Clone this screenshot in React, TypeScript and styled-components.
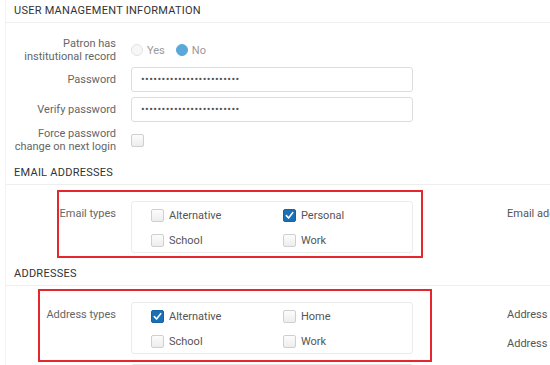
import React from "react";
import styled, { createGlobalStyle } from "styled-components";

const GlobalStyle = createGlobalStyle`
	* { box-sizing: border-box; }
	html, body {
		margin: 0;
		padding: 0;
		background: #fff;
		overflow: hidden;
	}
	body {
		width: 550px;
		height: 365px;
		font-family: Roboto, "Liberation Sans", Arial, sans-serif;
	}
`;

const Panel = styled.div`
	margin-left: 5px;
	min-height: 365px;
	border-left: 1px solid #f3f3f3;
`;

const SectionTitle = styled.h3<{ $mt: number }>`
	margin: ${(p) => p.$mt}px 0 0;
	height: 23px;
	padding: 1px 0 0 8px;
	line-height: 20px;
	border-bottom: 1px solid #eeeeee;
	font-size: 11px;
	font-weight: 400;
	letter-spacing: 0.25px;
	color: #333;
	text-transform: uppercase;
	white-space: nowrap;
`;

const Form = styled.div`
	display: grid;
	grid-template-rows: 25px 25px 25px 24px;
	row-gap: 5px;
	padding-top: 14px;
`;

const Row = styled.div`
	display: grid;
	grid-template-columns: 110px 282px 1fr;
	column-gap: 15px;
	align-items: center;
`;

const Label = styled.div`
	text-align: right;
	font-size: 11px;
	line-height: 13px;
	color: #666;
`;

const RadioGroup = styled.div`
	display: flex;
	align-items: center;
	font-size: 11px;
	color: #999;
`;

const RadioItem = styled.label`
	display: flex;
	align-items: center;
	gap: 4px;
	margin-right: 11px;
`;

const RadioDot = styled.span<{ $on?: boolean }>`
	width: 12px;
	height: 12px;
	border-radius: 50%;
	border: 1px solid ${(p) => (p.$on ? "#5aa7da" : "#e2e2e2")};
	background: ${(p) => (p.$on ? "#5aa7da" : "#f7f7f7")};
`;

const TextInput = styled.input`
	width: 282px;
	height: 25px;
	padding: 0 9px;
	border: 1px solid #dddddd;
	border-radius: 3px;
	font-family: inherit;
	font-size: 11px;
	letter-spacing: 0.4px;
	color: #555;
	outline: none;
	background: #fff;
`;

const TypesRow = styled(Row)<{ $mt: number }>`
	position: relative;
	align-items: start;
	margin-top: ${(p) => p.$mt}px;
`;

const TypesLabel = styled(Label)`
	line-height: 26px;
`;

const SideLabels = styled.div`
	display: flex;
	flex-direction: column;
	padding-left: 79px;
	font-size: 11px;
	line-height: 26px;
	gap: 3px;
	color: #555;
	white-space: nowrap;
`;

const Highlight = styled.div<{ $left: number; $width: number; $top: number; $bottom: number }>`
	position: absolute;
	left: ${(p) => p.$left}px;
	width: ${(p) => p.$width}px;
	top: ${(p) => p.$top}px;
	bottom: ${(p) => p.$bottom}px;
	border: 2px solid #e4262f;
	pointer-events: none;
`;

const CheckGroup = styled.div`
	display: grid;
	grid-template-columns: 132px 1fr;
	grid-auto-rows: 25px;
	height: 52px;
	padding: 1px 0 0 19px;
	border: 1px solid #ececec;
	border-radius: 3px;
`;

const Option = styled.label`
	display: flex;
	align-items: center;
	gap: 5px;
	font-size: 11px;
	color: #555;
`;

const Box = styled.span<{ $checked?: boolean }>`
	display: inline-flex;
	align-items: center;
	justify-content: center;
	width: 13px;
	height: 13px;
	border-radius: 2px;
	border: 1px solid ${(p) => (p.$checked ? "#1762a3" : "#cfcfcf")};
	background: ${(p) => (p.$checked ? "#1a6fb5" : "linear-gradient(#fcfcfc, #ededed)")};
	svg {
		width: 9px;
		height: 9px;
	}
`;

const EmptyBox = styled.div`
	width: 282px;
	height: 25px;
	border: 1px solid #e6e6e6;
	border-radius: 3px;
`;

const NextRow = styled(Row)`
	margin-top: 7px;
`;

function Checkbox({ checked }: { checked?: boolean }) {
	return (
		<Box $checked={checked}>
			{checked ? (
				<svg viewBox='0 0 10 10'>
					<path d='M1.5 5.2 L4 7.8 L8.6 1.8' fill='none' stroke='#fff' strokeWidth='1.8' strokeLinecap='round' strokeLinejoin='round' />
				</svg>
			) : null}
		</Box>
	);
}

function Types({ items }: { items: [string, boolean][] }) {
	return (
		<CheckGroup>
			{items.map(([name, checked]) => (
				<Option key={name}>
					<Checkbox checked={checked} />
					{name}
				</Option>
			))}
		</CheckGroup>
	);
}

export default function App() {
	return (
		<>
			<GlobalStyle />
			<Panel>
				<SectionTitle $mt={0}>User Management Information</SectionTitle>
				<Form>
					<Row>
						<Label>
							Patron has
							<br />
							institutional record
						</Label>
						<RadioGroup>
							<RadioItem>
								<RadioDot />
								Yes
							</RadioItem>
							<RadioItem>
								<RadioDot $on />
								No
							</RadioItem>
						</RadioGroup>
					</Row>
					<Row>
						<Label>Password</Label>
						<TextInput type='password' readOnly value='abcdefghijklmnopqrstuvwx' />
					</Row>
					<Row>
						<Label>Verify password</Label>
						<TextInput type='password' readOnly value='abcdefghijklmnopqrstuvwx' />
					</Row>
					<Row>
						<Label>
							Force password
							<br />
							change on next login
						</Label>
						<Checkbox />
					</Row>
				</Form>

				<SectionTitle $mt={11}>Email addresses</SectionTitle>
				<TypesRow $mt={16}>
					<TypesLabel>Email types</TypesLabel>
					<Types
						items={[
							["Alternative", false],
							["Personal", true],
							["School", false],
							["Work", false],
						]}
					/>
					<SideLabels>
						<span>Email address</span>
					</SideLabels>
					<Highlight $left={51} $width={366} $top={-11} $bottom={-5} />
				</TypesRow>

				<SectionTitle $mt={10}>Addresses</SectionTitle>
				<TypesRow $mt={16}>
					<TypesLabel>Address types</TypesLabel>
					<Types
						items={[
							["Alternative", true],
							["Home", false],
							["School", false],
							["Work", false],
						]}
					/>
					<SideLabels>
						<span>Address</span>
						<span>Address</span>
					</SideLabels>
					<Highlight $left={32} $width={394} $top={-13} $bottom={-5} />
				</TypesRow>
				<NextRow>
					<span />
					<EmptyBox />
				</NextRow>
			</Panel>
		</>
	);
}
